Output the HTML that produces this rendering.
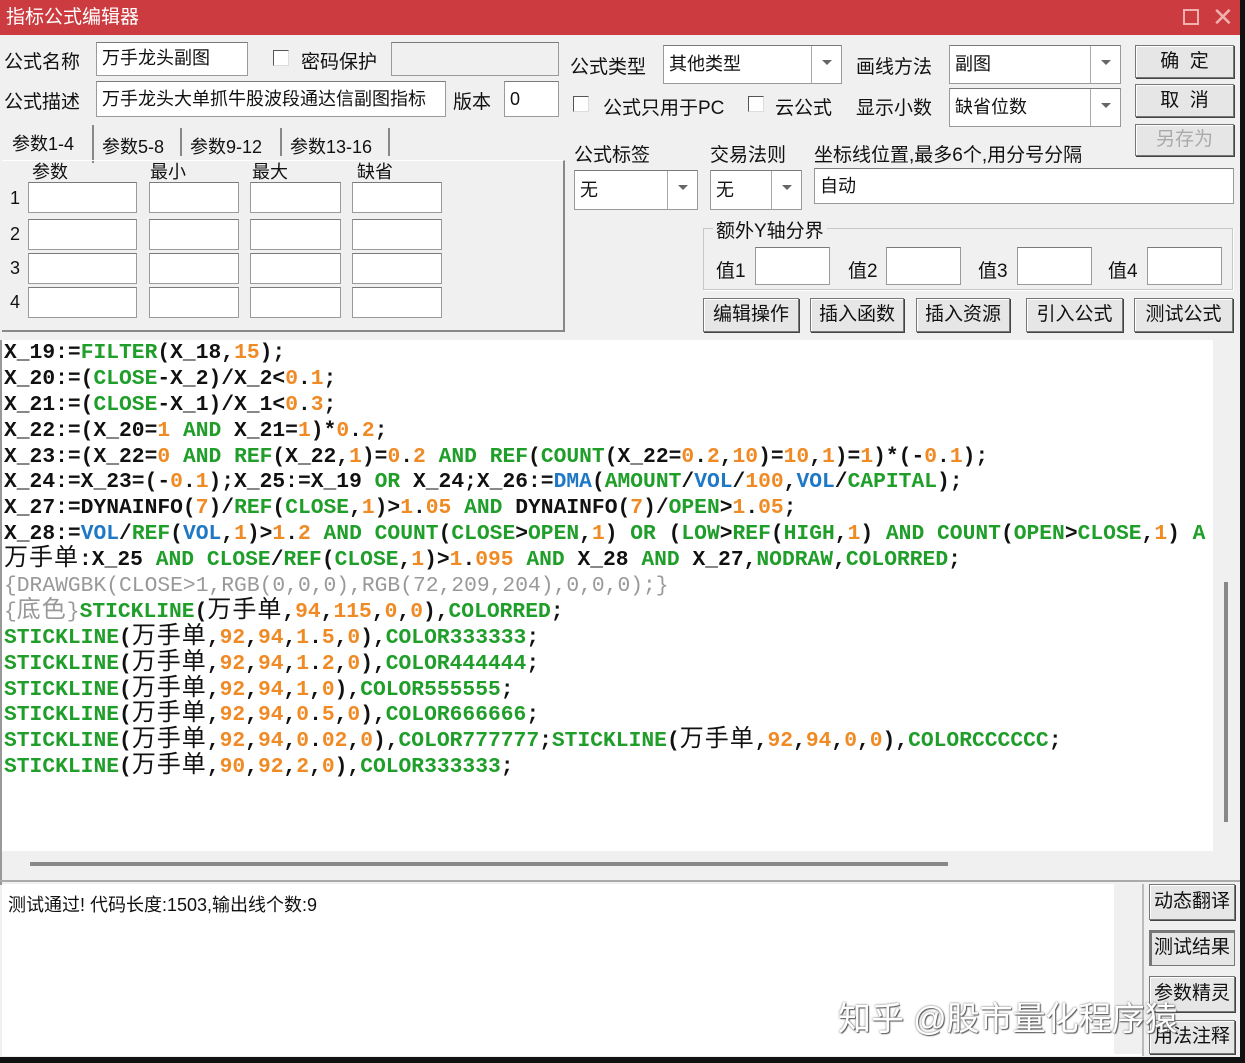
<!DOCTYPE html>
<html><head><meta charset="utf-8"><style>
*{margin:0;padding:0;box-sizing:border-box}
body{width:1245px;height:1063px;background:#111;position:relative;overflow:hidden;font-family:"Liberation Sans","Noto Sans CJK SC",sans-serif;font-size:19px;color:#111}
.a{position:absolute}
.win{left:0;top:0;width:1240px;height:1057px;background:#f0f0f0}
.title{left:0;top:0;width:1240px;height:35px;background:#cc3b3f;color:#fff;font-size:19px;line-height:35px;padding-left:6px}
.box{position:absolute;background:#fff;border:1px solid #9a9a9a;border-top-color:#7a7a7a;font-size:18px;line-height:30px;padding-left:5px;overflow:hidden;white-space:nowrap}
.lbl{position:absolute;font-size:19px;white-space:nowrap}
.dd{position:absolute;right:0;top:0;bottom:0;width:30px;border-left:1px solid #aaa;background:#fff}
.dd:after{content:"";position:absolute;left:10px;top:14px;border:5px solid transparent;border-top:5px solid #666}
.cb{position:absolute;width:16px;height:16px;background:#fff;border:1px solid #555;border-right-color:#ddd;border-bottom-color:#ddd}
.btn{position:absolute;background:#e6e6e6;border:1px solid #777;box-shadow:inset 1px 1px 0 #fff,1px 1px 0 #444;text-align:center;font-size:19px;white-space:nowrap}
.code{left:0;top:340px;width:1213px;height:511px;background:#fff;font-family:"Liberation Mono","Noto Sans CJK SC",monospace;font-weight:bold;font-size:21.3px;padding:1px 0 0 4px;white-space:pre;overflow:hidden}
.code div{height:25.9px;line-height:25.9px}
.g{color:#1f9e2a}.o{color:#f08a24}.b{color:#1f78c6}.k{color:#111}.y{color:#999;font-weight:normal}
.c{font-family:"Noto Sans CJK SC",sans-serif;font-weight:normal;font-size:24px;line-height:0;letter-spacing:1px}
</style></head><body>
<div class="a win"></div>
<div class="a title">指标公式编辑器</div>
<div class="a" style="left:1183px;top:9px;width:16px;height:16px;border:2px solid #f0b0b0"></div>
<div class="a" style="left:1212px;top:2px;color:#f0b0b0;font-size:26px;line-height:30px">✕</div>

<div class="lbl" style="left:4px;top:47px">公式名称</div>
<div class="box" style="left:96px;top:42px;width:152px;height:34px">万手龙头副图</div>
<div class="cb" style="left:273px;top:50px"></div>
<div class="lbl" style="left:301px;top:47px">密码保护</div>
<div class="box" style="left:391px;top:42px;width:168px;height:34px;background:#f0f0f0"></div>
<div class="lbl" style="left:4px;top:87px">公式描述</div>
<div class="box" style="left:96px;top:81px;width:350px;height:36px;line-height:34px">万手龙头大单抓牛股波段通达信副图指标</div>
<div class="lbl" style="left:453px;top:87px">版本</div>
<div class="box" style="left:504px;top:81px;width:55px;height:36px;line-height:34px">0</div>

<div class="lbl" style="left:12px;top:130px;font-size:18px">参数1-4</div>
<div class="a" style="left:92px;top:125px;width:2px;height:38px;background:#888"></div>
<div class="lbl" style="left:102px;top:133px;font-size:18px">参数5-8</div>
<div class="a" style="left:180px;top:128px;width:2px;height:28px;background:#888"></div>
<div class="lbl" style="left:190px;top:133px;font-size:18px">参数9-12</div>
<div class="a" style="left:280px;top:128px;width:2px;height:28px;background:#888"></div>
<div class="lbl" style="left:290px;top:133px;font-size:18px">参数13-16</div>
<div class="a" style="left:388px;top:128px;width:2px;height:28px;background:#888"></div>
<div class="a" style="left:2px;top:160px;width:563px;height:172px;border-right:2px solid #888;border-bottom:2px solid #888;border-top:1px solid #fff"></div>
<div class="lbl" style="left:32px;top:158px;font-size:18px">参数</div>
<div class="lbl" style="left:150px;top:158px;font-size:18px">最小</div>
<div class="lbl" style="left:252px;top:158px;font-size:18px">最大</div>
<div class="lbl" style="left:357px;top:158px;font-size:18px">缺省</div>
<div class="lbl" style="left:10px;top:188px;font-size:18px">1</div>
<div class="lbl" style="left:10px;top:224px;font-size:18px">2</div>
<div class="lbl" style="left:10px;top:258px;font-size:18px">3</div>
<div class="lbl" style="left:10px;top:292px;font-size:18px">4</div>
<div class="box" style="left:28px;top:182px;width:109px;height:31px"></div><div class="box" style="left:149px;top:182px;width:90px;height:31px"></div><div class="box" style="left:250px;top:182px;width:91px;height:31px"></div><div class="box" style="left:352px;top:182px;width:90px;height:31px"></div>
<div class="box" style="left:28px;top:219px;width:109px;height:31px"></div><div class="box" style="left:149px;top:219px;width:90px;height:31px"></div><div class="box" style="left:250px;top:219px;width:91px;height:31px"></div><div class="box" style="left:352px;top:219px;width:90px;height:31px"></div>
<div class="box" style="left:28px;top:253px;width:109px;height:31px"></div><div class="box" style="left:149px;top:253px;width:90px;height:31px"></div><div class="box" style="left:250px;top:253px;width:91px;height:31px"></div><div class="box" style="left:352px;top:253px;width:90px;height:31px"></div>
<div class="box" style="left:28px;top:287px;width:109px;height:31px"></div><div class="box" style="left:149px;top:287px;width:90px;height:31px"></div><div class="box" style="left:250px;top:287px;width:91px;height:31px"></div><div class="box" style="left:352px;top:287px;width:90px;height:31px"></div>

<div class="lbl" style="left:570px;top:52px">公式类型</div>
<div class="box" style="left:663px;top:45px;width:179px;height:39px;line-height:37px">其他类型<div class="dd"></div></div>
<div class="lbl" style="left:856px;top:52px">画线方法</div>
<div class="box" style="left:949px;top:45px;width:172px;height:39px;line-height:37px">副图<div class="dd"></div></div>
<div class="btn" style="left:1135px;top:45px;width:99px;height:33px;line-height:31px">确&nbsp;&nbsp;定</div>
<div class="cb" style="left:573px;top:96px"></div>
<div class="lbl" style="left:603px;top:93px">公式只用于PC</div>
<div class="cb" style="left:748px;top:96px"></div>
<div class="lbl" style="left:775px;top:93px">云公式</div>
<div class="lbl" style="left:856px;top:93px">显示小数</div>
<div class="box" style="left:949px;top:88px;width:172px;height:39px;line-height:37px">缺省位数<div class="dd"></div></div>
<div class="btn" style="left:1135px;top:84px;width:99px;height:33px;line-height:31px">取&nbsp;&nbsp;消</div>
<div class="btn" style="left:1135px;top:124px;width:99px;height:32px;line-height:30px;color:#aaa">另存为</div>

<div class="lbl" style="left:574px;top:140px">公式标签</div>
<div class="lbl" style="left:710px;top:140px">交易法则</div>
<div class="lbl" style="left:814px;top:140px">坐标线位置,最多6个,用分号分隔</div>
<div class="box" style="left:574px;top:170px;width:124px;height:40px;line-height:38px">无<div class="dd"></div></div>
<div class="box" style="left:710px;top:170px;width:92px;height:40px;line-height:38px">无<div class="dd"></div></div>
<div class="box" style="left:814px;top:168px;width:420px;height:36px;line-height:34px">自动</div>
<div class="a" style="left:703px;top:228px;width:530px;height:62px;border:1px solid #c8c8c8;box-shadow:1px 1px 0 #fff"></div>
<div class="lbl" style="left:713px;top:216px;background:#f0f0f0;padding:0 3px">额外Y轴分界</div>
<div class="lbl" style="left:716px;top:256px">值1</div><div class="box" style="left:755px;top:247px;width:75px;height:38px"></div>
<div class="lbl" style="left:848px;top:256px">值2</div><div class="box" style="left:886px;top:247px;width:75px;height:38px"></div>
<div class="lbl" style="left:978px;top:256px">值3</div><div class="box" style="left:1017px;top:247px;width:75px;height:38px"></div>
<div class="lbl" style="left:1108px;top:256px">值4</div><div class="box" style="left:1147px;top:247px;width:75px;height:38px"></div>
<div class="btn" style="left:703px;top:298px;width:96px;height:34px;line-height:32px">编辑操作</div>
<div class="btn" style="left:810px;top:298px;width:94px;height:34px;line-height:32px">插入函数</div>
<div class="btn" style="left:916px;top:298px;width:94px;height:34px;line-height:32px">插入资源</div>
<div class="btn" style="left:1026px;top:298px;width:97px;height:34px;line-height:32px">引入公式</div>
<div class="btn" style="left:1134px;top:298px;width:99px;height:34px;line-height:32px">测试公式</div>

<div class="a code"><div>X_19:=<span class="g">FILTER</span>(X_18,<span class="o">15</span>);</div><div>X_20:=(<span class="g">CLOSE</span>-X_2)/X_2&lt;<span class="o">0</span>.<span class="o">1</span>;</div><div>X_21:=(<span class="g">CLOSE</span>-X_1)/X_1&lt;<span class="o">0</span>.<span class="o">3</span>;</div><div>X_22:=(X_20=<span class="o">1</span> <span class="g">AND</span> X_21=<span class="o">1</span>)*<span class="o">0</span>.<span class="o">2</span>;</div><div>X_23:=(X_22=<span class="o">0</span> <span class="g">AND</span> <span class="g">REF</span>(X_22,<span class="o">1</span>)=<span class="o">0</span>.<span class="o">2</span> <span class="g">AND</span> <span class="g">REF</span>(<span class="g">COUNT</span>(X_22=<span class="o">0</span>.<span class="o">2</span>,<span class="o">10</span>)=<span class="o">10</span>,<span class="o">1</span>)=<span class="o">1</span>)*(-<span class="o">0</span>.<span class="o">1</span>);</div><div>X_24:=X_23=(-<span class="o">0</span>.<span class="o">1</span>);X_25:=X_19 <span class="g">OR</span> X_24;X_26:=<span class="b">DMA</span>(<span class="g">AMOUNT</span>/<span class="b">VOL</span>/<span class="o">100</span>,<span class="b">VOL</span>/<span class="g">CAPITAL</span>);</div><div>X_27:=DYNAINFO(<span class="o">7</span>)/<span class="g">REF</span>(<span class="g">CLOSE</span>,<span class="o">1</span>)&gt;<span class="o">1</span>.<span class="o">05</span> <span class="g">AND</span> DYNAINFO(<span class="o">7</span>)/<span class="g">OPEN</span>&gt;<span class="o">1</span>.<span class="o">05</span>;</div><div>X_28:=<span class="b">VOL</span>/<span class="g">REF</span>(<span class="b">VOL</span>,<span class="o">1</span>)&gt;<span class="o">1</span>.<span class="o">2</span> <span class="g">AND</span> <span class="g">COUNT</span>(<span class="g">CLOSE</span>&gt;<span class="g">OPEN</span>,<span class="o">1</span>) <span class="g">OR</span> (<span class="g">LOW</span>&gt;<span class="g">REF</span>(<span class="g">HIGH</span>,<span class="o">1</span>) <span class="g">AND</span> <span class="g">COUNT</span>(<span class="g">OPEN</span>&gt;<span class="g">CLOSE</span>,<span class="o">1</span>) <span class="g">A</span></div><div><span class="c">万手单</span>:X_25 <span class="g">AND</span> <span class="g">CLOSE</span>/<span class="g">REF</span>(<span class="g">CLOSE</span>,<span class="o">1</span>)&gt;<span class="o">1</span>.<span class="o">095</span> <span class="g">AND</span> X_28 <span class="g">AND</span> X_27,<span class="g">NODRAW</span>,<span class="g">COLORRED</span>;</div><div><span class="y">{DRAWGBK(CLOSE&gt;1,RGB(0,0,0),RGB(72,209,204),0,0,0);}</span></div><div><span class="y">{<span class="c">底色</span>}</span><span class="g">STICKLINE</span>(<span class="c">万手单</span>,<span class="o">94</span>,<span class="o">115</span>,<span class="o">0</span>,<span class="o">0</span>),<span class="g">COLORRED</span>;</div><div><span class="g">STICKLINE</span>(<span class="c">万手单</span>,<span class="o">92</span>,<span class="o">94</span>,<span class="o">1</span>.<span class="o">5</span>,<span class="o">0</span>),<span class="g">COLOR333333</span>;</div><div><span class="g">STICKLINE</span>(<span class="c">万手单</span>,<span class="o">92</span>,<span class="o">94</span>,<span class="o">1</span>.<span class="o">2</span>,<span class="o">0</span>),<span class="g">COLOR444444</span>;</div><div><span class="g">STICKLINE</span>(<span class="c">万手单</span>,<span class="o">92</span>,<span class="o">94</span>,<span class="o">1</span>,<span class="o">0</span>),<span class="g">COLOR555555</span>;</div><div><span class="g">STICKLINE</span>(<span class="c">万手单</span>,<span class="o">92</span>,<span class="o">94</span>,<span class="o">0</span>.<span class="o">5</span>,<span class="o">0</span>),<span class="g">COLOR666666</span>;</div><div><span class="g">STICKLINE</span>(<span class="c">万手单</span>,<span class="o">92</span>,<span class="o">94</span>,<span class="o">0</span>.<span class="o">02</span>,<span class="o">0</span>),<span class="g">COLOR777777</span>;<span class="g">STICKLINE</span>(<span class="c">万手单</span>,<span class="o">92</span>,<span class="o">94</span>,<span class="o">0</span>,<span class="o">0</span>),<span class="g">COLORCCCCCC</span>;</div><div><span class="g">STICKLINE</span>(<span class="c">万手单</span>,<span class="o">90</span>,<span class="o">92</span>,<span class="o">2</span>,<span class="o">0</span>),<span class="g">COLOR333333</span>;</div></div>
<div class="a" style="left:1213px;top:340px;width:27px;height:511px;background:#f0f0f0"></div>
<div class="a" style="left:1224px;top:582px;width:4px;height:240px;background:#888"></div>
<div class="a" style="left:0;top:340px;width:2px;height:545px;background:#999"></div>
<div class="a" style="left:30px;top:862px;width:918px;height:4px;background:#888"></div>
<div class="a" style="left:0;top:880px;width:1240px;height:2px;background:#aaa"></div>

<div class="a" style="left:2px;top:884px;width:1142px;height:172px;background:#fff;border-right:2px solid #bbb"></div>
<div class="a" style="left:1114px;top:884px;width:28px;height:170px;background:#f0f0f0"></div>
<div class="lbl" style="left:8px;top:891px;font-size:18px">测试通过! 代码长度:1503,输出线个数:9</div>
<div class="btn" style="left:1149px;top:884px;width:86px;height:36px;line-height:34px">动态翻译</div>
<div class="btn" style="left:1149px;top:930px;width:86px;height:36px;line-height:34px;box-shadow:inset 2px 2px 0 #777">测试结果</div>
<div class="btn" style="left:1149px;top:976px;width:86px;height:36px;line-height:34px">参数精灵</div>
<div class="btn" style="left:1149px;top:1020px;width:86px;height:34px;line-height:32px">用法注释</div>
<div class="lbl" style="left:838px;top:992px;font-size:33px;color:#fff;text-shadow:0 0 2px #666,1px 1px 1px #555">知乎 @股市量化程序猿</div>
</body></html>
